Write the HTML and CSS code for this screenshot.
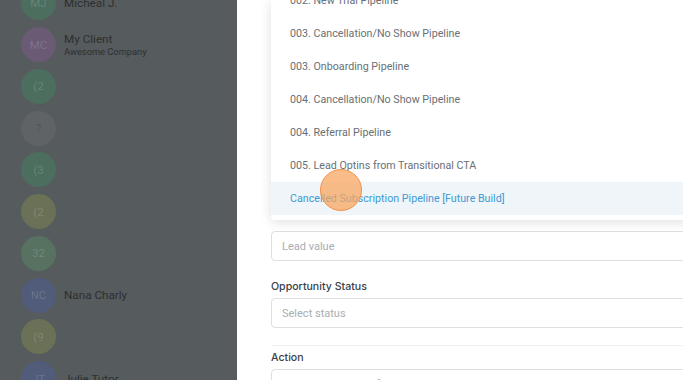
FILE: index.html
```html
<!DOCTYPE html>
<html lang="en">
<head>
  <meta charset="UTF-8">
  <meta name="viewport" content="width=device-width, initial-scale=1.0">
  <title>Opportunity</title>
  <link rel="stylesheet" href="styles.css">
</head>
<body>
  <div class="screen">

    <!-- Contacts list (dimmed behind the drawer) -->
    <div class="contacts">
      <div class="contact">
        <div class="avatar green">MJ</div>
        <div class="contact-name">Micheal J.</div>
      </div>
      <div class="contact">
        <div class="avatar purple">MC</div>
        <div>
          <div class="contact-name">My Client</div>
          <div class="contact-company">Awesome Company</div>
        </div>
      </div>
      <div class="contact">
        <div class="avatar green">(2</div>
      </div>
      <div class="contact">
        <div class="avatar grey">?</div>
      </div>
      <div class="contact">
        <div class="avatar green">(3</div>
      </div>
      <div class="contact">
        <div class="avatar olive">(2</div>
      </div>
      <div class="contact">
        <div class="avatar sage">32</div>
      </div>
      <div class="contact">
        <div class="avatar blue">NC</div>
        <div class="contact-name">Nana Charly</div>
      </div>
      <div class="contact">
        <div class="avatar olive">(9</div>
      </div>
      <div class="contact">
        <div class="avatar blue">JT</div>
        <div class="contact-name">Julie Tutor</div>
      </div>
    </div>

    <!-- Opportunity drawer -->
    <div class="drawer">
      <div class="form">

        <!-- Pipeline dropdown (open) -->
        <div class="dropdown">
          <ul class="dropdown-list">
            <li>002. New Trial Pipeline</li>
            <li>003. Cancellation/No Show Pipeline</li>
            <li>003. Onboarding Pipeline</li>
            <li>004. Cancellation/No Show Pipeline</li>
            <li>004. Referral Pipeline</li>
            <li>005. Lead Optins from Transitional CTA</li>
            <li class="active">Cancelled Subscription Pipeline [Future Build]</li>
          </ul>
        </div>

        <div class="field">
          <div class="input placeholder">Lead value</div>
        </div>

        <div class="field">
          <label class="field-label">Opportunity Status</label>
          <div class="input placeholder">Select status</div>
        </div>

        <div class="field divided">
          <label class="field-label">Action</label>
          <div class="input placeholder">Enter a description for the action that is linked to your pipeline</div>
        </div>
      </div>

      <div class="click-marker"></div>
    </div>
  </div>
</body>
</html>
```

FILE: styles.css
```css
* {
  box-sizing: border-box;
}
html, body {
  margin: 0;
  height: 100%;
  overflow: hidden;
}
body {
  font-family: Roboto, "Liberation Sans", sans-serif;
  font-size: 11px;
  background: #fff;
}
.screen {
  display: grid;
  grid-template-columns: 237px 1fr;
  height: 380px;
}

/* contacts list, already dimmed */
.contacts {
  background: #565b5d;
  padding: 0 0 0 21px;
  display: grid;
  grid-auto-rows: 41.75px;
  margin-top: -17.9px;
}
.contact {
  display: flex;
  align-items: center;
  gap: 8px;
}
.avatar {
  width: 35px;
  height: 35px;
  border-radius: 50%;
  display: flex;
  align-items: center;
  justify-content: center;
  color: rgba(255, 255, 255, 0.16);
  font-size: 11.5px;
  flex-shrink: 0;
}
.avatar.green { background: #4c6e5e; }
.avatar.purple { background: #6a5a74; }
.avatar.grey { background: #5f6365; color: rgba(0, 0, 0, 0.18); }
.avatar.olive { background: #6a7157; }
.avatar.sage { background: #587262; }
.avatar.blue { background: #515c7a; }
.contact-name {
  color: #2c3032;
  font-size: 11.7px;
}
.contact-company {
  color: #2c3032;
  font-size: 9.3px;
  margin-top: 0;
}

/* drawer */
.drawer {
  position: relative;
  background: #fff;
  overflow: hidden;
}
.form {
  padding: 231px 0 0 34px;
  margin-right: -20px;
}
.field {
  display: flex;
  flex-direction: column;
}
.field + .field {
  margin-top: 19px;
}
.field.divided {
  margin-top: 17px;
  padding-top: 5px;
  border-top: 1px solid #f0f1f3;
}
.field-label {
  font-family: Inter, Roboto, sans-serif;
  color: #3b4045;
  font-weight: 500;
  font-size: 10.6px;
  line-height: 14px;
  margin-bottom: 4px;
}
.input {
  height: 30px;
  border: 1px solid #dcdfe4;
  border-radius: 4px;
  padding: 0 10px;
  display: flex;
  align-items: center;
  white-space: nowrap;
  overflow: hidden;
}
.input.placeholder {
  color: #a9adb2;
}

/* open dropdown */
.dropdown {
  position: absolute;
  top: 0;
  left: 34px;
  right: -20px;
  height: 220px;
  background: #fff;
  border-radius: 0 0 4px 4px;
  box-shadow: 0 2px 12px rgba(0, 0, 0, 0.13);
  overflow: hidden;
  z-index: 2;
}
.dropdown-list {
  list-style: none;
  margin: -16px 0 0;
  padding: 0;
}
.dropdown-list li {
  height: 33px;
  line-height: 33px;
  padding: 0 19px;
  font-size: 10.7px;
  color: #6a6f74;
  white-space: nowrap;
}
.dropdown-list li.active {
  background: #eff5f8;
  color: #3d9ad6;
}

/* click indicator */
.click-marker {
  position: absolute;
  left: 83px;
  top: 169px;
  width: 42px;
  height: 42px;
  border-radius: 50%;
  background: rgba(248, 163, 92, 0.72);
  border: 1.5px solid #f2934a;
  z-index: 3;
}
```
